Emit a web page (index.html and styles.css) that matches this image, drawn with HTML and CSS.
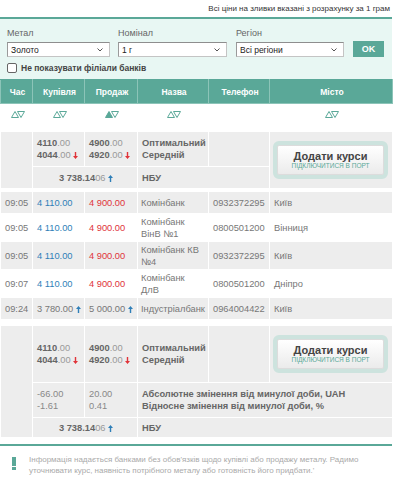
FILE: index.html
```html
<!DOCTYPE html>
<html lang="uk">
<head>
    <meta charset="UTF-8">
    <meta name="viewport" content="width=device-width, initial-scale=1.0">
    <title>Ціни на зливки</title>
    <link rel="stylesheet" href="styles.css">
</head>
<body>
    <div class="page">
        <p class="top-note">Всі ціни на зливки вказані з розрахунку за 1 грам</p>

        <div class="filter">
            <div class="filter-row">
                <div class="field field-metal">
                    <label>Метал</label>
                    <div class="select"><span>Золото</span><svg width="6" height="4" viewBox="0 0 6 4"><path d="M0.5 0.5 L3 3 L5.5 0.5" fill="none" stroke="#555" stroke-width="1"/></svg></div>
                </div>
                <div class="field field-nominal">
                    <label>Номінал</label>
                    <div class="select"><span>1 г</span><svg width="6" height="4" viewBox="0 0 6 4"><path d="M0.5 0.5 L3 3 L5.5 0.5" fill="none" stroke="#555" stroke-width="1"/></svg></div>
                </div>
                <div class="field field-region">
                    <label>Регіон</label>
                    <div class="select"><span>Всі регіони</span><svg width="6" height="4" viewBox="0 0 6 4"><path d="M0.5 0.5 L3 3 L5.5 0.5" fill="none" stroke="#555" stroke-width="1"/></svg></div>
                </div>
                <button class="ok-btn">OK</button>
            </div>
            <div class="check-row">
                <span class="check"></span>
                <span class="check-label">Не показувати філіали банків</span>
            </div>
        </div>

        <table class="rates">
            <colgroup>
                <col style="width:32px">
                <col style="width:52px">
                <col style="width:53px">
                <col style="width:71px">
                <col style="width:61px">
                <col style="width:123px">
            </colgroup>
            <thead>
                <tr>
                    <th>Час</th>
                    <th>Купівля</th>
                    <th>Продаж</th>
                    <th>Назва</th>
                    <th>Телефон</th>
                    <th>Місто</th>
                </tr>
            </thead>
            <tbody>
                <tr class="sort">
                    <td><svg width="14" height="7" viewBox="0 0 14 7"><path d="M0.5 6.5 L4 0.5 L7.5 6.5 Z" fill="none" stroke="#5aa898"/><path d="M6.5 0.5 L13.5 0.5 L10 6.5 Z" fill="none" stroke="#5aa898"/></svg></td>
                    <td><svg width="14" height="7" viewBox="0 0 14 7"><path d="M0.5 6.5 L4 0.5 L7.5 6.5 Z" fill="none" stroke="#5aa898"/><path d="M6.5 0.5 L13.5 0.5 L10 6.5 Z" fill="none" stroke="#5aa898"/></svg></td>
                    <td><svg width="14" height="7" viewBox="0 0 14 7"><path d="M0.5 6.5 L4 0.5 L7.5 6.5 Z" fill="#5aa898" stroke="#5aa898"/><path d="M6.5 0.5 L13.5 0.5 L10 6.5 Z" fill="none" stroke="#5aa898"/></svg></td>
                    <td><svg width="14" height="7" viewBox="0 0 14 7"><path d="M0.5 6.5 L4 0.5 L7.5 6.5 Z" fill="none" stroke="#5aa898"/><path d="M6.5 0.5 L13.5 0.5 L10 6.5 Z" fill="none" stroke="#5aa898"/></svg></td>
                    <td></td>
                    <td><svg width="14" height="7" viewBox="0 0 14 7"><path d="M0.5 6.5 L4 0.5 L7.5 6.5 Z" fill="none" stroke="#5aa898"/><path d="M6.5 0.5 L13.5 0.5 L10 6.5 Z" fill="none" stroke="#5aa898"/></svg></td>
                </tr>
            </tbody>

            <!-- summary on top -->
            <tbody class="group">
                <tr class="row-avg">
                    <td rowspan="2"></td>
                    <td class="num"><b>4110</b>.00<br><b>4044</b>.00 <svg class="arr down" width="5" height="7" viewBox="0 0 5 7"><path d="M1.8 0h1.4v4H5L2.5 7 0 4h1.8z"/></svg></td>
                    <td class="num"><b>4900</b>.00<br><b>4920</b>.00 <svg class="arr down" width="5" height="7" viewBox="0 0 5 7"><path d="M1.8 0h1.4v4H5L2.5 7 0 4h1.8z"/></svg></td>
                    <td class="label">Оптимальний<br>Середній</td>
                    <td></td>
                    <td rowspan="2" class="connect-cell">
                        <div class="connect">
                            <div class="connect-inner">
                                <span class="connect-title">Додати курси</span>
                                <span class="connect-sub">підключитися в порт</span>
                            </div>
                        </div>
                    </td>
                </tr>
                <tr class="row-nbu">
                    <td colspan="2" class="nbu"><b>3 738.14</b>06 <svg class="arr up" width="5" height="7" viewBox="0 0 5 7"><path d="M1.8 7h1.4V3H5L2.5 0 0 3h1.8z"/></svg></td>
                    <td colspan="2" class="label">НБУ</td>
                </tr>
            </tbody>

            <tbody class="gap"><tr><td colspan="6"></td></tr></tbody>

            <tbody class="data">
                <tr class="odd">
                    <td>09:05</td>
                    <td class="buy">4 110.00</td>
                    <td class="sell">4 900.00</td>
                    <td>Комінбанк</td>
                    <td>0932372295</td>
                    <td>Київ</td>
                </tr>
                <tr>
                    <td>09:05</td>
                    <td class="buy">4 110.00</td>
                    <td class="sell">4 900.00</td>
                    <td>Комінбанк ВінВ №1</td>
                    <td>0800501200</td>
                    <td>Вінниця</td>
                </tr>
                <tr class="odd">
                    <td>09:05</td>
                    <td class="buy">4 110.00</td>
                    <td class="sell">4 900.00</td>
                    <td>Комінбанк КВ №4</td>
                    <td>0932372295</td>
                    <td>Київ</td>
                </tr>
                <tr>
                    <td>09:07</td>
                    <td class="buy">4 110.00</td>
                    <td class="sell">4 900.00</td>
                    <td>Комінбанк ДлВ</td>
                    <td>0800501200</td>
                    <td>Дніпро</td>
                </tr>
                <tr class="odd">
                    <td>09:24</td>
                    <td>3 780.00 <svg class="arr up" width="5" height="7" viewBox="0 0 5 7"><path d="M1.8 7h1.4V3H5L2.5 0 0 3h1.8z"/></svg></td>
                    <td>5 000.00 <svg class="arr up" width="5" height="7" viewBox="0 0 5 7"><path d="M1.8 7h1.4V3H5L2.5 0 0 3h1.8z"/></svg></td>
                    <td>Індустріалбанк</td>
                    <td>0964004422</td>
                    <td>Київ</td>
                </tr>
            </tbody>

            <tbody class="gap gap-lg"><tr><td colspan="6"></td></tr></tbody>

            <!-- summary at the bottom -->
            <tbody class="group">
                <tr class="row-avg-lg">
                    <td rowspan="3"></td>
                    <td class="num"><b>4110</b>.00<br><b>4044</b>.00 <svg class="arr down" width="5" height="7" viewBox="0 0 5 7"><path d="M1.8 0h1.4v4H5L2.5 7 0 4h1.8z"/></svg></td>
                    <td class="num"><b>4900</b>.00<br><b>4920</b>.00 <svg class="arr down" width="5" height="7" viewBox="0 0 5 7"><path d="M1.8 0h1.4v4H5L2.5 7 0 4h1.8z"/></svg></td>
                    <td class="label">Оптимальний<br>Середній</td>
                    <td></td>
                    <td class="connect-cell">
                        <div class="connect">
                            <div class="connect-inner">
                                <span class="connect-title">Додати курси</span>
                                <span class="connect-sub">підключитися в порт</span>
                            </div>
                        </div>
                    </td>
                </tr>
                <tr class="row-diff">
                    <td class="diff">-66.00<br>-1.61</td>
                    <td class="diff">20.00<br>0.41</td>
                    <td colspan="3" class="label">Абсолютне змінення від минулої доби, UAH<br>Відносне змінення від минулої доби, %</td>
                </tr>
                <tr class="row-nbu-sm">
                    <td colspan="2" class="nbu"><b>3 738.14</b>06 <svg class="arr up" width="5" height="7" viewBox="0 0 5 7"><path d="M1.8 7h1.4V3H5L2.5 0 0 3h1.8z"/></svg></td>
                    <td colspan="3" class="label">НБУ</td>
                </tr>
            </tbody>
        </table>

        <div class="disclaimer">
            <svg class="mark" width="4" height="13" viewBox="0 0 4 13"><rect x="0" y="0" width="4" height="9" fill="#5aa898"/><rect x="0" y="10" width="4" height="3" fill="#5aa898"/></svg>
            <p>Інформація надається банками без обов'язків щодо купівлі або продажу металу. Радимо уточнювати курс, наявність потрібного металу або готовність його придбати.'</p>
        </div>
    </div>
</body>
</html>
```

FILE: styles.css
```css
body {
    margin: 0;
    font-family: "Liberation Sans", Arial, sans-serif;
    color: #666;
    background: #fff;
}
.page {
    width: 392px;
}
.top-note {
    margin: 0;
    height: 17px;
    line-height: 17px;
    font-size: 8px;
    text-align: right;
    color: #333;
    padding-right: 2px;
    border-bottom: 2px solid #5aa898;
}

/* filter panel */
.filter {
    background: #e8f7f3;
    padding: 9px 0 6px 7px;
}
.filter-row {
    display: flex;
    align-items: flex-end;
}
.field label {
    display: block;
    font-size: 9px;
    line-height: 11px;
    color: #666;
    margin-bottom: 3px;
}
.field-metal {
    width: 103px;
    margin-right: 8px;
}
.field-nominal {
    width: 109px;
    margin-right: 9px;
}
.field-region {
    width: 108px;
    margin-right: 9px;
}
.select {
    box-sizing: border-box;
    height: 15px;
    display: flex;
    align-items: center;
    justify-content: space-between;
    padding: 0 6px 0 3px;
    background: #fff;
    border: 1px solid #c4c4c4;
    border-top-color: #8e8e8e;
    border-left-color: #9a9a9a;
    font-size: 8.5px;
    color: #222;
}
.ok-btn {
    width: 31px;
    height: 16px;
    padding: 0;
    border: none;
    background: #5aa898;
    color: #fff;
    font-family: inherit;
    font-size: 9px;
    font-weight: bold;
}
.check-row {
    display: flex;
    align-items: center;
    margin-top: 6px;
    height: 10px;
}
.check {
    box-sizing: border-box;
    width: 10px;
    height: 10px;
    border: 1px solid #666;
    border-radius: 2px;
    background: #fff;
}
.check-label {
    margin-left: 4px;
    font-size: 8.5px;
    font-weight: bold;
    color: #444;
}

/* table */
.rates {
    width: 392px;
    table-layout: fixed;
    border-collapse: collapse;
    font-size: 9.3px;
}
.rates th,
.rates td {
    border: 1px solid #fff;
    padding: 2px 2px 2px 4px;
    line-height: 12px;
    text-align: left;
    vertical-align: middle;
}
.rates thead th {
    height: 19px;
    background: #5aa898;
    color: #fff;
    font-size: 8.5px;
    font-weight: bold;
    text-align: center;
    border-color: #8cc4b8;
    border-top-color: #5aa898;
}
.sort td {
    height: 20px;
    padding-top: 5px;
    vertical-align: top;
    text-align: center;
}
.group td {
    background: #ededed;
}
.row-avg td {
    height: 30px;
}
.row-nbu td {
    height: 17px;
}
.row-avg-lg td {
    height: 52px;
}
.row-diff td {
    height: 30px;
}
.row-nbu-sm td {
    height: 15px;
}
.gap td {
    height: 2px;
    padding: 0;
    border: none;
}
.gap-lg td {
    height: 5px;
}
.num {
    color: #999;
    line-height: 11px;
}
.num b,
.nbu b {
    color: #666;
}
.label {
    font-weight: bold;
    color: #666;
    line-height: 14px;
}
.nbu {
    text-align: center !important;
    color: #999;
}
.diff {
    color: #888;
    line-height: 12px;
}
.arr {
    vertical-align: -1px;
    fill: currentColor;
}
.down {
    color: #e0343a;
}
.up {
    color: #2f7fb8;
}
.data td {
    height: 18px;
    padding-top: 2px;
    padding-bottom: 1px;
    line-height: 12px;
    color: #777;
}
.data tr.odd td {
    background: #ededed;
}
.data td:nth-child(4) {
    padding-left: 3px;
    padding-right: 6px;
}
.data .buy {
    color: #2f7fb8;
}
.data .sell {
    color: #e0343a;
}

/* connect button */
.connect-cell {
    padding: 0 4px 0 3px !important;
}
.connect {
    box-sizing: border-box;
    width: 115px;
    height: 38px;
    border: 4px solid #cde3de;
    border-radius: 6px;
    background: #cde3de;
}
.connect-inner {
    box-sizing: border-box;
    height: 100%;
    border: 1px solid #dcdcdc;
    border-radius: 2px;
    background: linear-gradient(#ffffff, #ebebeb);
    display: flex;
    flex-direction: column;
    align-items: center;
    justify-content: center;
}
.connect-title {
    font-size: 11px;
    line-height: 12px;
    font-weight: bold;
    color: #444;
}
.connect-sub {
    font-size: 6.5px;
    line-height: 8px;
    text-transform: uppercase;
    color: #5aa898;
}

/* disclaimer */
.disclaimer {
    margin-top: 6px;
    border-top: 2px solid #5aa898;
    padding: 8px 0 0 12px;
    display: flex;
    align-items: flex-start;
}
.mark {
    flex: none;
    margin-top: 3px;
}
.disclaimer p {
    margin: 0 0 0 13px;
    font-size: 8px;
    line-height: 11px;
    color: #aaa;
}
```
